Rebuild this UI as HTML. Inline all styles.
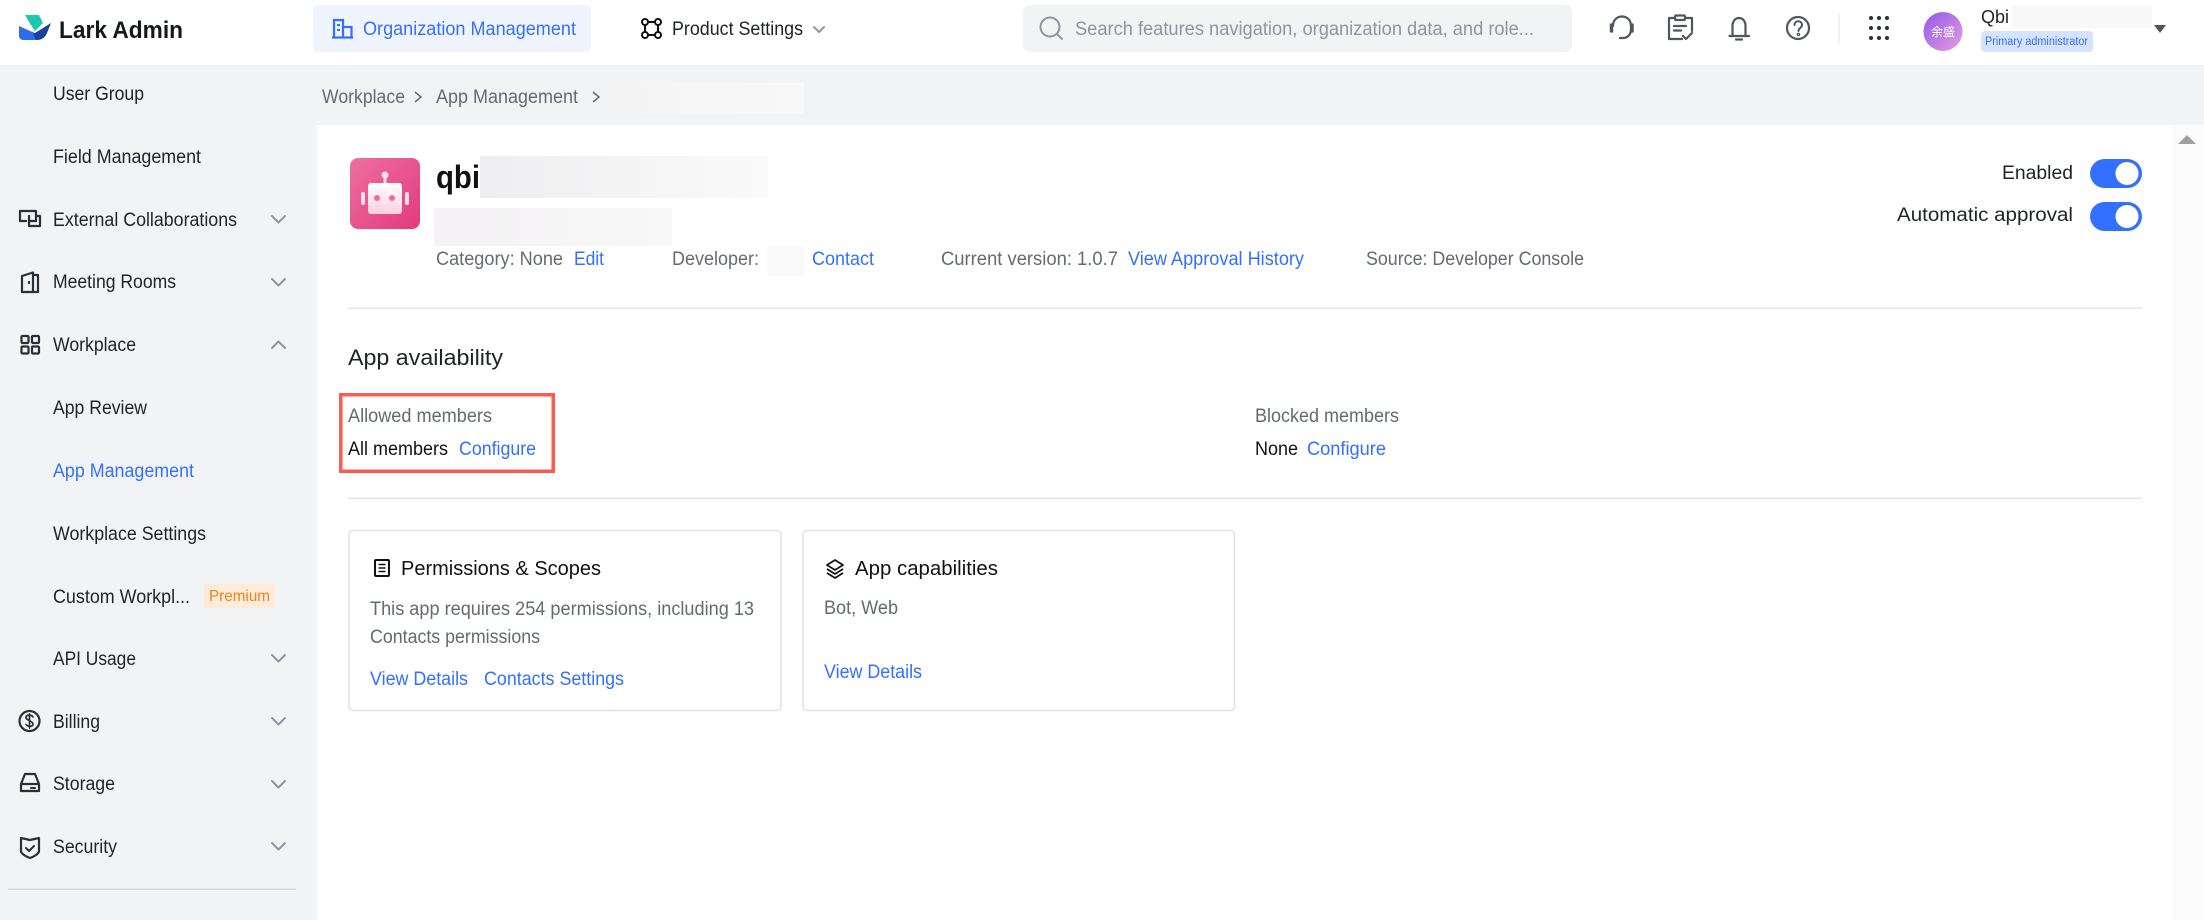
<!DOCTYPE html>
<html><head><meta charset="utf-8"><title>Lark Admin</title>
<style>
html,body{margin:0;padding:0;background:#fff;width:2204px;height:920px;overflow:hidden}
svg{display:block;position:absolute;left:0;top:0}
text{font-family:"Liberation Sans","Noto Sans CJK SC",sans-serif;font-size:19px;fill:#1f2329}
.g{fill:#646a73}.l{fill:#3370ff}.k{fill:#111}
.ic{fill:none;stroke:#2b2f36;stroke-width:2.2;stroke-linejoin:round;stroke-linecap:round}
.ch{fill:none;stroke:#8f959e;stroke-width:2;stroke-linecap:round;stroke-linejoin:round}
.ti{fill:none;stroke:#51565d;stroke-width:2.2;stroke-linecap:round;stroke-linejoin:round}
</style></head><body>
<svg width="2204" height="920" viewBox="0 0 2204 920" xmlns="http://www.w3.org/2000/svg">
<defs>
<linearGradient id="cv1" x1="0" x2="1"><stop offset="0" stop-color="#f4f4f5"/><stop offset="1" stop-color="#f8f8f8"/></linearGradient>
<linearGradient id="cv2" x1="0" x2="1"><stop offset="0" stop-color="#eeeef0"/><stop offset="1" stop-color="#fafafa"/></linearGradient>
<linearGradient id="cv3" x1="0" x2="1"><stop offset="0" stop-color="#f4f2f4"/><stop offset="1" stop-color="#f8f8f8"/></linearGradient>
<linearGradient id="pk" x1="0" y1="0" x2="1" y2="1"><stop offset="0" stop-color="#ee709f"/><stop offset="1" stop-color="#e13a7e"/></linearGradient>
<linearGradient id="bt" x1="0" y1="0" x2="0" y2="1"><stop offset="0" stop-color="#fff"/><stop offset="1" stop-color="#f8cfe0"/></linearGradient>
<linearGradient id="av" x1="0" y1="0" x2="1" y2="1"><stop offset="0" stop-color="#9257ea"/><stop offset="1" stop-color="#e59ddf"/></linearGradient>
</defs>

<!-- backgrounds -->
<rect x="0" y="65" width="2204" height="855" fill="#f2f3f5"/>
<rect x="317" y="125" width="1887" height="795" fill="#fff"/>
<rect x="2173" y="125" width="31" height="795" fill="#fbfbfb"/>
<polygon points="2178,144 2187,135 2196,144" fill="#a0a0a0"/>

<!-- header -->
<path d="M19 26l11 5 5 2 3 7h-15c-2 0-4-2-4-4z" fill="#2f6de8"/>
<path d="M25 15h14l4 8-8 8-6-9z" fill="#1fc7b0"/>
<path d="M35 33l16-10-4 10c-2 5-6 7-10 7h-1l-3-6z" fill="#17409f"/>
<text x="59" y="38" textLength="124" lengthAdjust="spacingAndGlyphs" style="font-size:24px;font-weight:700;fill:#15181c">Lark Admin</text>

<rect x="313" y="5" width="278" height="47" rx="5" fill="#f0f4ff"/>
<g fill="none" stroke="#3370ff" stroke-width="2.2"><path d="M334 37V20h9v17M343 27h8.500v10M332 37.500h21"/><path d="M337 25h3M337 30h3" stroke-width="2"/></g>
<text class="l" x="363" y="35" textLength="213" lengthAdjust="spacingAndGlyphs">Organization Management</text>

<g class="ic" style="stroke:#111;stroke-width:2"><circle cx="645" cy="22" r="3"/><circle cx="658" cy="22" r="3"/><circle cx="645" cy="35" r="3"/><circle cx="658" cy="35" r="3"/><path d="M648 22h7M648 35h7M645 25v7M658 25v7"/></g>
<text x="672" y="35" textLength="131" lengthAdjust="spacingAndGlyphs">Product Settings</text>
<path class="ch" d="M814 27l5 5 5-5" stroke-width="1.600"/>

<rect x="1023" y="5" width="549" height="47" rx="7" fill="#f2f3f5"/>
<circle cx="1050" cy="27" r="9.500" fill="none" stroke="#8f959e" stroke-width="2"/><path d="M1057 34l5 5" stroke="#8f959e" stroke-width="2" stroke-linecap="round"/>
<text x="1075" y="35" textLength="459" lengthAdjust="spacingAndGlyphs" style="fill:#8f959e">Search features navigation, organization data, and role...</text>

<!-- header icons -->
<g class="ti">
<path d="M1613 26c0-6 4-9.500 9-9.500s9 3.500 9 9.500v3c0 5-3 9-8 9h-3"/>
<path d="M1611.500 25v6" stroke-width="3.500"/><path d="M1632 25v6" stroke-width="3.500"/>
<path d="M1675 18h-6v21h13M1685 18h7v13"/><rect x="1675" y="15.500" width="10" height="4.500" rx="1"/><path d="M1674 26h12M1674 30.500h7M1683 36l3 3 6-6"/>
<path d="M1732.500 35v-9c0-5 3-8 6.500-8s6.500 3 6.500 8v9M1729.500 36h19.500M1736 39.500h6"/>
<circle cx="1798" cy="28" r="11"/><path d="M1794.500 25c0-5 7.500-5 7.500 0 0 3-3.500 3-3.500 6" stroke-width="2"/><circle cx="1798.500" cy="34.500" r=".6"/>
</g>
<rect x="1838.500" y="13" width="1" height="31" fill="#e5e6e8"/>
<g fill="#2b2f36"><circle cx="1871" cy="18" r="2"/><circle cx="1879" cy="18" r="2"/><circle cx="1887" cy="18" r="2"/><circle cx="1871" cy="28" r="2"/><circle cx="1879" cy="28" r="2"/><circle cx="1887" cy="28" r="2"/><circle cx="1871" cy="38" r="2"/><circle cx="1879" cy="38" r="2"/><circle cx="1887" cy="38" r="2"/></g>
<circle cx="1943" cy="31.500" r="19.500" fill="url(#av)"/>
<text x="1943" y="36" text-anchor="middle" style="font-size:12px;fill:#fff">余盛</text>
<text x="1981" y="23" textLength="28" lengthAdjust="spacingAndGlyphs" style="font-size:18px">Qbi</text>
<rect x="2012" y="6" width="140" height="22" fill="#f8f8f9"/>
<rect x="1981" y="31" width="112" height="21" rx="4" fill="#d6e3ff"/>
<text class="l" x="1985" y="45" textLength="103" lengthAdjust="spacingAndGlyphs" style="font-size:11.500px">Primary administrator</text>
<polygon points="2154,25 2166,25 2160,33" fill="#51565d"/>

<!-- breadcrumb -->
<text class="g" x="322" y="103" textLength="83" lengthAdjust="spacingAndGlyphs">Workplace</text>
<path d="M415 92l6 5-6 5" fill="none" stroke="#646a73" stroke-width="1.500"/>
<text class="g" x="436" y="103" textLength="142" lengthAdjust="spacingAndGlyphs">App Management</text>
<path d="M593 92l6 5-6 5" fill="none" stroke="#646a73" stroke-width="1.500"/>
<rect x="610" y="83" width="194" height="31" fill="url(#cv1)"/>

<!-- sidebar -->
<text x="53" y="100" textLength="91" lengthAdjust="spacingAndGlyphs">User Group</text>
<text x="53" y="163" textLength="148" lengthAdjust="spacingAndGlyphs">Field Management</text>

<text x="53" y="226" textLength="184" lengthAdjust="spacingAndGlyphs">External Collaborations</text>
<g class="ic"><path d="M26 221h-6v-10h16v10h-7"/><path d="M29 216v10h11v-10h-3"/></g>
<path class="ch" d="M272 216l6.500 6.500 6.500-6.500"/>

<text x="53" y="288" textLength="123" lengthAdjust="spacingAndGlyphs">Meeting Rooms</text>
<g class="ic"><path d="M22 292V276l11-3.500V292zM33 275h5v17H22"/><path d="M29 282v1"/></g>
<path class="ch" d="M272 279l6.500 6.500 6.500-6.500"/>

<text x="53" y="351" textLength="83" lengthAdjust="spacingAndGlyphs">Workplace</text>
<g class="ic"><rect x="21.500" y="336" width="7" height="7" rx="1"/><rect x="32" y="336" width="7" height="7" rx="1"/><rect x="21.500" y="346.500" width="7" height="7" rx="1"/><rect x="32" y="346.500" width="7" height="7" rx="1"/></g>
<path class="ch" d="M272 348l6.500-6.500 6.500 6.500"/>

<text x="53" y="414" textLength="94" lengthAdjust="spacingAndGlyphs">App Review</text>
<text class="l" x="53" y="477" textLength="141" lengthAdjust="spacingAndGlyphs">App Management</text>
<text x="53" y="540" textLength="153" lengthAdjust="spacingAndGlyphs">Workplace Settings</text>
<text x="53" y="603" textLength="137" lengthAdjust="spacingAndGlyphs">Custom Workpl...</text>
<rect x="204" y="584" width="71" height="24" rx="3" fill="#feebd8"/>
<text x="209" y="601" textLength="61" lengthAdjust="spacingAndGlyphs" style="font-size:16px;fill:#e8831e">Premium</text>
<text x="53" y="665" textLength="83" lengthAdjust="spacingAndGlyphs">API Usage</text>
<path class="ch" d="M272 655l6.500 6.500 6.500-6.500"/>

<text x="53" y="728" textLength="47" lengthAdjust="spacingAndGlyphs">Billing</text>
<g class="ic"><circle cx="29.500" cy="721" r="10"/><path d="M33 717c-1-2-6-3-7 0s7 4 7 7-5 3-7 .5M29.500 714v14" stroke-width="1.700"/></g>
<path class="ch" d="M272 718l6.500 6.500 6.500-6.500"/>

<text x="53" y="790" textLength="62" lengthAdjust="spacingAndGlyphs">Storage</text>
<g class="ic"><path d="M21 784l4-10h10l4 10v7H21zM21 784h18"/><path d="M31 788h4" stroke-width="2"/></g>
<path class="ch" d="M272 781l6.500 6.500 6.500-6.500"/>

<text x="53" y="853" textLength="64" lengthAdjust="spacingAndGlyphs">Security</text>
<g class="ic"><path d="M21 838l9 2 9-2v13c0 3-6 6-9 7-3-1-9-4-9-7z"/><path d="M26 848l3 3 5-5" stroke-width="2"/></g>
<path class="ch" d="M272 843l6.500 6.500 6.500-6.500"/>
<rect x="8" y="888.500" width="288" height="1.500" fill="#d8dadd"/>

<!-- app header -->
<rect x="350" y="158" width="70" height="71" rx="8" fill="url(#pk)"/>
<path d="M385 175v9" stroke="#fbdce8" stroke-width="3"/><circle cx="385" cy="175" r="3.500" fill="#fbdce8"/>
<rect x="368" y="183" width="34" height="31" rx="3" fill="url(#bt)"/>
<rect x="361" y="192" width="4" height="13" rx="2" fill="#fbdce8"/><rect x="405" y="192" width="4" height="13" rx="2" fill="#fbdce8"/>
<circle cx="377" cy="198" r="3" fill="#ee6d9c"/><circle cx="392" cy="198" r="3" fill="#ee6d9c"/>
<text x="436" y="188" textLength="44" lengthAdjust="spacingAndGlyphs" style="font-size:32px;font-weight:700;fill:#111">qbi</text>
<rect x="480" y="156" width="288" height="42" fill="url(#cv2)"/>
<rect x="434" y="208" width="238" height="38" fill="url(#cv3)"/>

<text class="g" x="436" y="265" textLength="127" lengthAdjust="spacingAndGlyphs">Category: None</text>
<text class="l" x="574" y="265" textLength="30" lengthAdjust="spacingAndGlyphs">Edit</text>
<text class="g" x="672" y="265" textLength="87" lengthAdjust="spacingAndGlyphs">Developer:</text>
<rect x="767" y="246" width="37" height="30" fill="#fafafa"/>
<text class="l" x="812" y="265" textLength="62" lengthAdjust="spacingAndGlyphs">Contact</text>
<text class="g" x="941" y="265" textLength="177" lengthAdjust="spacingAndGlyphs">Current version: 1.0.7</text>
<text class="l" x="1128" y="265" textLength="176" lengthAdjust="spacingAndGlyphs">View Approval History</text>
<text class="g" x="1366" y="265" textLength="218" lengthAdjust="spacingAndGlyphs">Source: Developer Console</text>

<text x="2002" y="179" textLength="71" lengthAdjust="spacingAndGlyphs">Enabled</text>
<rect x="2090" y="159" width="52" height="29" rx="14.500" fill="#3370ff"/><circle cx="2127" cy="173.500" r="11.500" fill="#fff"/>
<text x="1897" y="221" textLength="176" lengthAdjust="spacingAndGlyphs">Automatic approval</text>
<rect x="2090" y="202" width="52" height="29" rx="14.500" fill="#3370ff"/><circle cx="2127" cy="216.500" r="11.500" fill="#fff"/>

<rect x="348" y="307.500" width="1794" height="1.500" fill="#e3e5e8"/>

<!-- availability -->
<text x="348" y="365" textLength="155" lengthAdjust="spacingAndGlyphs" style="font-size:22px">App availability</text>
<rect x="340.750" y="394.750" width="212.500" height="76.500" fill="none" stroke="#ff5a4f" stroke-width="3.500"/>
<text class="g" x="348" y="422" textLength="144" lengthAdjust="spacingAndGlyphs">Allowed members</text>
<text class="k" x="348" y="455" textLength="100" lengthAdjust="spacingAndGlyphs">All members</text>
<text class="l" x="459" y="455" textLength="77" lengthAdjust="spacingAndGlyphs">Configure</text>
<text class="g" x="1255" y="422" textLength="144" lengthAdjust="spacingAndGlyphs">Blocked members</text>
<text class="k" x="1255" y="455" textLength="43" lengthAdjust="spacingAndGlyphs">None</text>
<text class="l" x="1307" y="455" textLength="79" lengthAdjust="spacingAndGlyphs">Configure</text>
<rect x="348" y="497.500" width="1794" height="1.500" fill="#e3e5e8"/>

<!-- cards -->
<rect x="349" y="530.500" width="432" height="180" rx="4" fill="#fff" stroke="#dfe1e4" stroke-width="1.500"/>
<rect x="803" y="530.500" width="431.500" height="180" rx="4" fill="#fff" stroke="#dfe1e4" stroke-width="1.500"/>
<g fill="none" stroke="#111" stroke-width="2"><rect x="375" y="560" width="14" height="16" rx="1"/><path d="M378.500 564.500h7M378.500 568h7M378.500 571.500h7" stroke-width="1.600"/></g>
<text class="k" x="401" y="575" textLength="200" lengthAdjust="spacingAndGlyphs" style="font-size:20px">Permissions &amp; Scopes</text>
<text class="g" x="370" y="615" textLength="384" lengthAdjust="spacingAndGlyphs">This app requires 254 permissions, including 13</text>
<text class="g" x="370" y="643" textLength="170" lengthAdjust="spacingAndGlyphs">Contacts permissions</text>
<text class="l" x="370" y="685" textLength="98" lengthAdjust="spacingAndGlyphs">View Details</text>
<text class="l" x="484" y="685" textLength="140" lengthAdjust="spacingAndGlyphs">Contacts Settings</text>
<g fill="none" stroke="#111" stroke-width="1.700" stroke-linejoin="round"><path d="M835 560l8 5-8 5-8-5z"/><path d="M827 569l8 5 8-5M827 573l8 5 8-5"/></g>
<text class="k" x="855" y="575" textLength="143" lengthAdjust="spacingAndGlyphs" style="font-size:20px">App capabilities</text>
<text class="g" x="824" y="614" textLength="74" lengthAdjust="spacingAndGlyphs">Bot, Web</text>
<text class="l" x="824" y="678" textLength="98" lengthAdjust="spacingAndGlyphs">View Details</text>
</svg>
</body></html>
